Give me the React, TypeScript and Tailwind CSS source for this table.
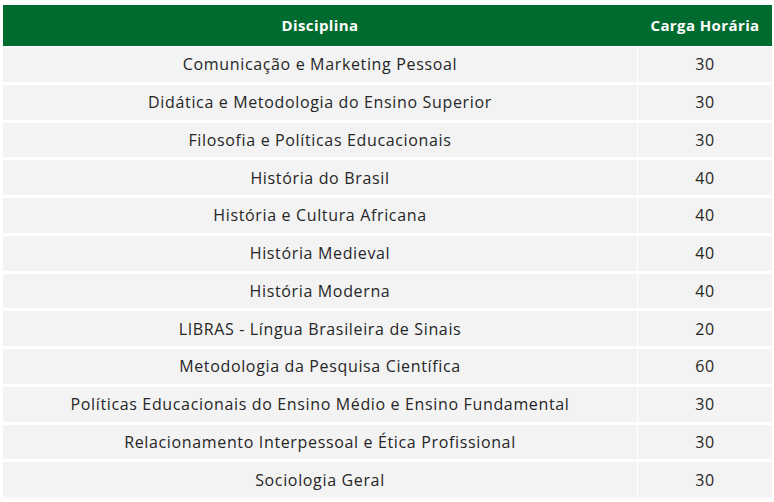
const rows: [string, number][] = [
  ["Comunicação e Marketing Pessoal", 30],
  ["Didática e Metodologia do Ensino Superior", 30],
  ["Filosofia e Políticas Educacionais", 30],
  ["História do Brasil", 40],
  ["História e Cultura Africana", 40],
  ["História Medieval", 40],
  ["História Moderna", 40],
  ["LIBRAS - Língua Brasileira de Sinais", 20],
  ["Metodologia da Pesquisa Científica", 60],
  ["Políticas Educacionais do Ensino Médio e Ensino Fundamental", 30],
  ["Relacionamento Interpessoal e Ética Profissional", 30],
  ["Sociologia Geral", 30],
];

export default function App() {
  return (
    <div className="min-h-screen bg-white pl-[3px] pt-[5px] font-['Open_Sans',sans-serif]">
      <div className="flex w-[769px] flex-col gap-px">
        <div className="flex h-[41px] items-center bg-[#006b2f] text-[15px] font-bold tracking-[0.4px] text-white">
          <div className="w-[634px] text-center">Disciplina</div>
          <div className="flex-1 pl-px text-center">Carga Horária</div>
        </div>
        {rows.map(([name, hours]) => (
          <div key={name} className="flex h-[36.75px] gap-px pb-[2px] text-[16px] tracking-[0.65px] text-[#262626]">
            <div className="flex w-[634px] items-center justify-center bg-[#f3f3f3]">{name}</div>
            <div className="flex flex-1 items-center justify-center bg-[#f3f3f3]">{hours}</div>
          </div>
        ))}
      </div>
    </div>
  );
}
